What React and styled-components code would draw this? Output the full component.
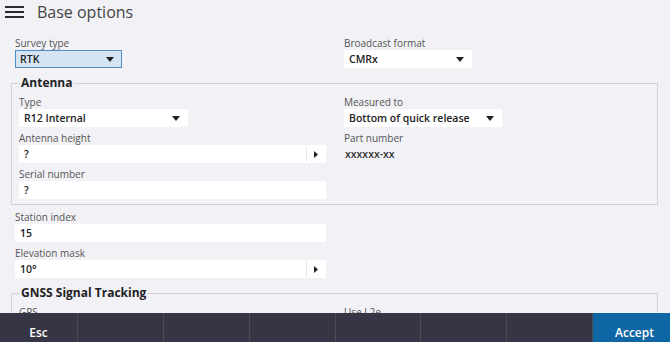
import styled, { createGlobalStyle } from "styled-components";

const GlobalStyle = createGlobalStyle`
  html, body {
    margin: 0;
    padding: 0;
    overflow: hidden;
  }
  body {
    background: #f1f1f6;
    font-family: "Open Sans", "Noto Sans", sans-serif;
    color: #222;
  }
`;

const Screen = styled.div`
  height: 100vh;
  display: flex;
  flex-direction: column;
  overflow: hidden;
`;

const Header = styled.header`
  height: 24px;
  display: flex;
  align-items: center;
  padding-left: 5px;
  gap: 13px;
  flex: none;
`;

const Title = styled.h1`
  margin: 0;
  font-size: 16px;
  font-weight: 400;
  color: #444;
  line-height: 20px;
`;

const Content = styled.main`
  height: 289px;
  flex: none;
  overflow: hidden;
  padding: 12px 12px 0 15px;
  box-sizing: border-box;
`;

const Row = styled.div`
  display: grid;
  grid-template-columns: ${(p) => p.$left}px 1fr;
  margin-bottom: ${(p) => p.$gap ?? 4}px;
`;

const Field = styled.div`
  display: flex;
  flex-direction: column;
  align-items: flex-start;
`;

const Label = styled.label`
  font-size: 10px;
  line-height: 14px;
  color: #555;
`;

const Box = styled.div`
  width: ${(p) => p.$w}px;
  height: 18px;
  box-sizing: border-box;
  display: flex;
  align-items: center;
  justify-content: space-between;
  padding-left: 4px;
  padding-right: ${(p) => (p.$select ? 7 : 0)}px;
  background: ${(p) => (p.$active ? "#d4e4f2" : "#fff")};
  border: 1px solid ${(p) => (p.$active ? "#4c8fc8" : "#fff")};
  font-size: 10.5px;
  font-weight: 600;
  color: #222;
`;

const StepButton = styled.span`
  width: 18px;
  height: 100%;
  display: flex;
  align-items: center;
  justify-content: center;
  border-left: 1px solid #e6e6ea;
`;

const Value = styled.span`
  font-size: 10.5px;
  font-weight: 600;
  line-height: 18px;
  padding-left: 1px;
  color: #333;
`;

const Group = styled.fieldset`
  margin: 0 0 5px -4px;
  width: 647px;
  box-sizing: border-box;
  padding: 4px 0 5px 7px;
  border: 1px solid #d2d2d8;
  min-inline-size: 0;
`;

const Legend = styled.legend`
  font-size: 12px;
  font-weight: 700;
  line-height: 16px;
  padding: 0 1px;
  margin-left: 1px;
  color: #222;
`;

const Footer = styled.footer`
  height: 38px;
  flex: none;
  display: grid;
  grid-template-columns: 77px repeat(6, 1fr) 78px;
  background: #363545;
`;

const FooterButton = styled.button`
  border: none;
  border-left: ${(p) => (p.$first ? "none" : "1px solid #4b4a59")};
  background: ${(p) => (p.$primary ? "#0f66a5" : "transparent")};
  color: #fff;
  font-family: inherit;
  font-size: 12px;
  font-weight: 600;
  padding: 1px 0 0 ${(p) => (p.$primary ? 6 : 0)}px;
  cursor: pointer;
`;

const DownArrow = () => (
  <svg width="8" height="5" viewBox="0 0 8 5">
    <path d="M0 0h8L4 5z" fill="#222" />
  </svg>
);

const RightArrow = () => (
  <svg width="4" height="7" viewBox="0 0 4 7">
    <path d="M0 0l4 3.5L0 7z" fill="#222" />
  </svg>
);

const Menu = () => (
  <svg width="19" height="12" viewBox="0 0 19 12">
    <g stroke="#2b2b2b" strokeWidth="2">
      <path d="M0 1h19M0 6h19M0 11h19" />
    </g>
  </svg>
);

const Select = ({ label, value, w, active }) => (
  <Field>
    <Label>{label}</Label>
    <Box $w={w} $select $active={active}>
      <span>{value}</span>
      <DownArrow />
    </Box>
  </Field>
);

const Input = ({ label, value, w, step }) => (
  <Field>
    <Label>{label}</Label>
    <Box $w={w}>
      <span>{value}</span>
      {step && (
        <StepButton>
          <RightArrow />
        </StepButton>
      )}
    </Box>
  </Field>
);

const App = () => {
  return (
    <Screen>
      <GlobalStyle />
      <Header>
        <Menu />
        <Title>Base options</Title>
      </Header>
      <Content>
        <Row $left={329} $gap={7}>
          <Select label="Survey type" value="RTK" w={107} active />
          <Select label="Broadcast format" value="CMRx" w={128} />
        </Row>
        <Group>
          <Legend>Antenna</Legend>
          <Row $left={325}>
            <Select label="Type" value="R12 Internal" w={169} />
            <Select label="Measured to" value="Bottom of quick release" w={158} />
          </Row>
          <Row $left={325}>
            <Input label="Antenna height" value="?" w={307} step />
            <Field>
              <Label>Part number</Label>
              <Value>xxxxxx-xx</Value>
            </Field>
          </Row>
          <Row $left={325} $gap={0}>
            <Input label="Serial number" value="?" w={307} />
          </Row>
        </Group>
        <Row $left={329}>
          <Input label="Station index" value="15" w={311} />
        </Row>
        <Row $left={329} $gap={7}>
          <Input label="Elevation mask" value="10°" w={311} step />
        </Row>
        <Group>
          <Legend>GNSS Signal Tracking</Legend>
          <Row $left={325}>
            <Field>
              <Label>GPS</Label>
            </Field>
            <Field>
              <Label>Use L2e</Label>
            </Field>
          </Row>
        </Group>
      </Content>
      <Footer>
        <FooterButton $first>Esc</FooterButton>
        <FooterButton />
        <FooterButton />
        <FooterButton />
        <FooterButton />
        <FooterButton />
        <FooterButton />
        <FooterButton $primary>Accept</FooterButton>
      </Footer>
    </Screen>
  );
};

export default App;
